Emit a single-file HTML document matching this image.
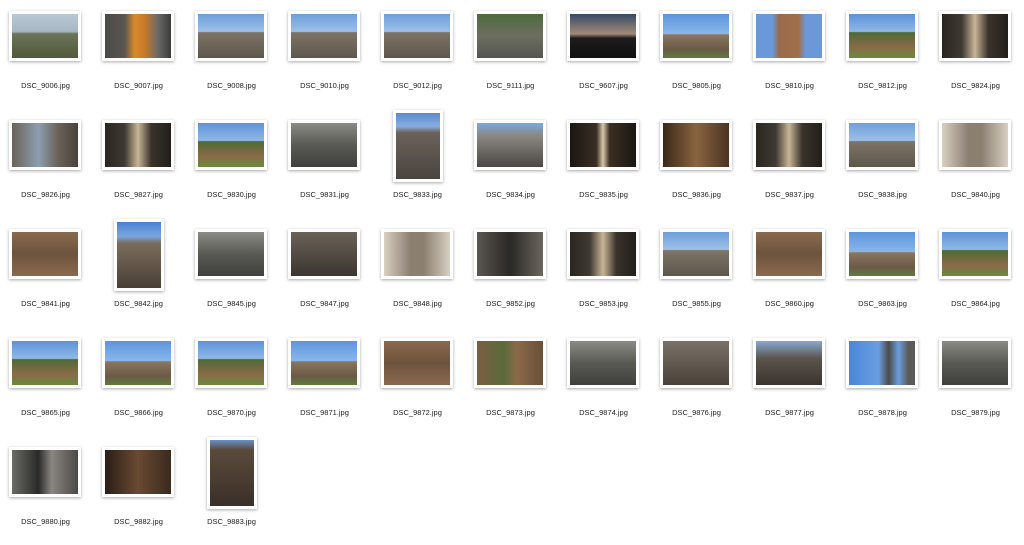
<!DOCTYPE html>
<html><head><meta charset="utf-8"><style>
body{margin:0;width:1024px;height:537px;background:#fff;overflow:hidden;position:relative;font-family:"Liberation Sans",sans-serif}
.c{position:absolute;width:93px;height:109px}
.t{position:absolute;left:10px;top:11px;width:66px;height:44px;border:3px solid #fff;box-shadow:0 1px 3px rgba(0,0,0,.35)}
.p{left:22px;top:1px;width:44px;height:66px}
.l{position:absolute;left:0;width:93px;top:81px;text-align:center;font-size:7.5px;line-height:10px;color:#222}
.s1{background:linear-gradient(#6f9fd8 0,#9cc0e8 40%,#7d7466 42%,#5e574c 100%)}
.s2{background:linear-gradient(#5d95dc 0,#8ab6ea 45%,#8b7660 47%,#6a5a46 80%,#5f7c3c 100%)}
.s3{background:linear-gradient(#5e93d8 0,#8fb8e6 40%,#4d6b35 42%,#8a6a48 75%,#6a8a3e 100%)}
.dk{background:linear-gradient(90deg,#2a2520 0,#3f3a33 30%,#c9b596 50%,#3a332b 70%,#221e1a 100%)}
.br{background:linear-gradient(#8a6a4e,#6d533d 50%,#8a6a4e)}
.gr{background:linear-gradient(#8b8b85,#5a5a55 50%,#3f3f3b)}
.bg{background:linear-gradient(90deg,#d8cfc2,#8b7f70 40%,#8b7f70 60%,#d8cfc2)}
</style></head><body>
<div class="c" style="left:-1px;top:0"><div class="t" style="background:linear-gradient(#b9c8d6 0,#a6b6c2 40%,#6c7458 45%,#4f5a38 100%)"></div><div class="l">DSC_9006.jpg</div></div>
<div class="c" style="left:92px;top:0"><div class="t" style="background:linear-gradient(90deg,#4a4a48,#5a5650 30%,#d88a2a 45%,#c87a28 60%,#6a6a68 80%,#3a3a38)"></div><div class="l">DSC_9007.jpg</div></div>
<div class="c" style="left:185px;top:0"><div class="t s1"></div><div class="l">DSC_9008.jpg</div></div>
<div class="c" style="left:278px;top:0"><div class="t s1"></div><div class="l">DSC_9010.jpg</div></div>
<div class="c" style="left:371px;top:0"><div class="t s1"></div><div class="l">DSC_9012.jpg</div></div>
<div class="c" style="left:464px;top:0"><div class="t" style="background:linear-gradient(#4f6a3c,#6c6e60 50%,#555650)"></div><div class="l">DSC_9111.jpg</div></div>
<div class="c" style="left:557px;top:0"><div class="t" style="background:linear-gradient(#364a66 0,#a18a78 45%,#1d1c1c 55%,#111 100%)"></div><div class="l">DSC_9607.jpg</div></div>
<div class="c" style="left:650px;top:0"><div class="t s2"></div><div class="l">DSC_9805.jpg</div></div>
<div class="c" style="left:743px;top:0"><div class="t" style="background:linear-gradient(90deg,#6a98d8 0,#6a98d8 25%,#9a6a4a 35%,#a0704c 65%,#6a98d8 75%)"></div><div class="l">DSC_9810.jpg</div></div>
<div class="c" style="left:836px;top:0"><div class="t s3"></div><div class="l">DSC_9812.jpg</div></div>
<div class="c" style="left:929px;top:0"><div class="t dk"></div><div class="l">DSC_9824.jpg</div></div>

<div class="c" style="left:-1px;top:109px"><div class="t" style="background:linear-gradient(90deg,#6a6258,#8c9eb0 40%,#6a6258 70%,#4a4238)"></div><div class="l">DSC_9826.jpg</div></div>
<div class="c" style="left:92px;top:109px"><div class="t dk"></div><div class="l">DSC_9827.jpg</div></div>
<div class="c" style="left:185px;top:109px"><div class="t s3"></div><div class="l">DSC_9830.jpg</div></div>
<div class="c" style="left:278px;top:109px"><div class="t gr"></div><div class="l">DSC_9831.jpg</div></div>
<div class="c" style="left:371px;top:109px"><div class="t p" style="background:linear-gradient(#5a8ad0 0,#8aaee0 20%,#6a625a 30%,#4a4440 100%)"></div><div class="l">DSC_9833.jpg</div></div>
<div class="c" style="left:464px;top:109px"><div class="t" style="background:linear-gradient(#7aa8e0 0,#8a8680 30%,#4a4844 100%)"></div><div class="l">DSC_9834.jpg</div></div>
<div class="c" style="left:557px;top:109px"><div class="t" style="background:linear-gradient(90deg,#1a1612,#3a2e24 40%,#d8c8a8 50%,#3a2e24 60%,#1a1612)"></div><div class="l">DSC_9835.jpg</div></div>
<div class="c" style="left:650px;top:109px"><div class="t" style="background:linear-gradient(90deg,#3a2818,#8a6440 50%,#4a3422)"></div><div class="l">DSC_9836.jpg</div></div>
<div class="c" style="left:743px;top:109px"><div class="t dk"></div><div class="l">DSC_9837.jpg</div></div>
<div class="c" style="left:836px;top:109px"><div class="t s1"></div><div class="l">DSC_9838.jpg</div></div>
<div class="c" style="left:929px;top:109px"><div class="t bg"></div><div class="l">DSC_9840.jpg</div></div>

<div class="c" style="left:-1px;top:218px"><div class="t br"></div><div class="l">DSC_9841.jpg</div></div>
<div class="c" style="left:92px;top:218px"><div class="t p" style="background:linear-gradient(#4a82d0 0,#7aa6de 22%,#7a6c5c 32%,#4a4036 100%)"></div><div class="l">DSC_9842.jpg</div></div>
<div class="c" style="left:185px;top:218px"><div class="t gr"></div><div class="l">DSC_9845.jpg</div></div>
<div class="c" style="left:278px;top:218px"><div class="t" style="background:linear-gradient(#6a6258,#3a3630)"></div><div class="l">DSC_9847.jpg</div></div>
<div class="c" style="left:371px;top:218px"><div class="t bg"></div><div class="l">DSC_9848.jpg</div></div>
<div class="c" style="left:464px;top:218px"><div class="t" style="background:linear-gradient(90deg,#5a5650,#2a2824 50%,#6a665e)"></div><div class="l">DSC_9852.jpg</div></div>
<div class="c" style="left:557px;top:218px"><div class="t dk"></div><div class="l">DSC_9853.jpg</div></div>
<div class="c" style="left:650px;top:218px"><div class="t s1"></div><div class="l">DSC_9855.jpg</div></div>
<div class="c" style="left:743px;top:218px"><div class="t br"></div><div class="l">DSC_9860.jpg</div></div>
<div class="c" style="left:836px;top:218px"><div class="t s2"></div><div class="l">DSC_9863.jpg</div></div>
<div class="c" style="left:929px;top:218px"><div class="t s3"></div><div class="l">DSC_9864.jpg</div></div>

<div class="c" style="left:-1px;top:327px"><div class="t s3"></div><div class="l">DSC_9865.jpg</div></div>
<div class="c" style="left:92px;top:327px"><div class="t s2"></div><div class="l">DSC_9866.jpg</div></div>
<div class="c" style="left:185px;top:327px"><div class="t s3"></div><div class="l">DSC_9870.jpg</div></div>
<div class="c" style="left:278px;top:327px"><div class="t s2"></div><div class="l">DSC_9871.jpg</div></div>
<div class="c" style="left:371px;top:327px"><div class="t br"></div><div class="l">DSC_9872.jpg</div></div>
<div class="c" style="left:464px;top:327px"><div class="t" style="background:linear-gradient(90deg,#7a5e44,#5a6a3a 40%,#8a6a4a 60%,#6a5038)"></div><div class="l">DSC_9873.jpg</div></div>
<div class="c" style="left:557px;top:327px"><div class="t gr"></div><div class="l">DSC_9874.jpg</div></div>
<div class="c" style="left:650px;top:327px"><div class="t" style="background:linear-gradient(#7a7268,#4a423a)"></div><div class="l">DSC_9876.jpg</div></div>
<div class="c" style="left:743px;top:327px"><div class="t" style="background:linear-gradient(#8aa8d0,#5a544c 40%,#3a342e)"></div><div class="l">DSC_9877.jpg</div></div>
<div class="c" style="left:836px;top:327px"><div class="t" style="background:linear-gradient(90deg,#4a86d8 0,#6a9ee0 45%,#4a4a48 60%,#6a9ee0 75%,#5a5a58 90%)"></div><div class="l">DSC_9878.jpg</div></div>
<div class="c" style="left:929px;top:327px"><div class="t gr"></div><div class="l">DSC_9879.jpg</div></div>

<div class="c" style="left:-1px;top:436px"><div class="t" style="background:linear-gradient(90deg,#6a6a66,#2a2a28 40%,#8a8680 60%,#4a4a46)"></div><div class="l">DSC_9880.jpg</div></div>
<div class="c" style="left:92px;top:436px"><div class="t" style="background:linear-gradient(90deg,#2a1e16,#6a4a32 50%,#3a2a1e)"></div><div class="l">DSC_9882.jpg</div></div>
<div class="c" style="left:185px;top:436px"><div class="t p" style="background:linear-gradient(#6a90c8 0,#5a4a3a 15%,#3a3028 100%)"></div><div class="l">DSC_9883.jpg</div></div>
</body></html>
